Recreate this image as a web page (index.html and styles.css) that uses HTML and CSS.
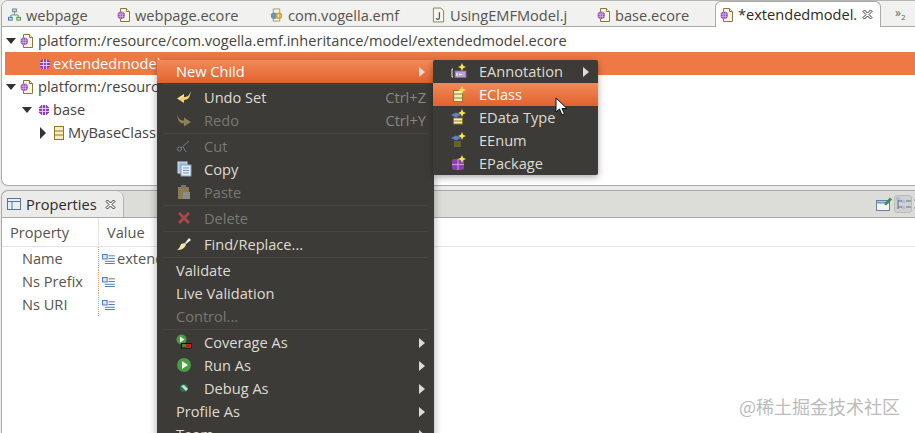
FILE: index.html
```html
<!DOCTYPE html>
<html lang="en">
<head>
<meta charset="utf-8">
<title>Eclipse EMF editor</title>
<link rel="stylesheet" href="styles.css">
</head>
<body>
<svg class="defs" width="0" height="0">
  <defs>
    <symbol id="pkg" viewBox="0 0 12 12"><path d="M3.500 1h5l2.500 2.500v5L8.500 11h-5L1 8.500v-5z" fill="#8a3fb5"/><path d="M1 4.500h10M1 7.500h10M4.500 1v10M7.500 1v10" stroke="#e6d3f2" stroke-width=".9"/></symbol>
    <symbol id="ecore" viewBox="0 0 13 16"><path d="M3.500 1.500h6l3 3v10h-9z" fill="#fbf6e2" stroke="#8a7440"/><path d="M9.500 1.500v3h3" fill="#fff" stroke="#8a7440"/><g transform="translate(0 4)"><use href="#pkg" width="8.500" height="8.500"/></g></symbol>
    <symbol id="cls" viewBox="0 0 10 14"><rect x=".5" y=".5" width="9" height="13" fill="#f8edb8" stroke="#8f7a2a"/><path d="M1 5h8M1 9h8" stroke="#8f7a2a"/></symbol>
    <symbol id="attr" viewBox="0 0 14 11"><rect x=".5" y=".5" width="5" height="5" fill="#dbe7f6" stroke="#3f6fb0"/><path d="M7 2h7M7 5h7M3 8h11M3 10.500h11" stroke="#3f6fb0"/></symbol>
    <symbol id="close" viewBox="0 0 11 11"><path d="M1 2.500 2.500 1 5.500 4 8.500 1 10 2.500 7 5.500 10 8.500 8.500 10 5.500 7 2.500 10 1 8.500 4 5.500z" fill="#fff" stroke="#333"/></symbol>
  </defs>
</svg>

<section class="editor">
  <div class="tabs">
    <div class="tab"><svg class="ic" viewBox="0 0 14 14"><path d="M7 3v4M3 10V7h8v3" fill="none" stroke="#7a8a7a"/><rect x="5" y=".5" width="4" height="3" fill="#f1d98a" stroke="#5a7fb0"/><rect x=".5" y="9.500" width="4" height="3" fill="#cfe3f5" stroke="#3f6fb0"/><rect x="9.500" y="9.500" width="4" height="3" fill="#cfe9c5" stroke="#4f8f4f"/></svg><span>webpage</span></div>
    <div class="tab"><svg class="ic"><use href="#ecore"/></svg><span>webpage.ecore</span></div>
    <div class="tab"><svg class="ic" viewBox="0 0 16 16"><path d="M4 .5h8v15H4z" fill="#f3efe2" stroke="#a58a52"/><circle cx="5" cy="9" r="4" fill="#5f93c9"/><circle cx="11" cy="9" r="3" fill="none" stroke="#d9a520" stroke-width="2"/></svg><span>com.vogella.emf</span></div>
    <div class="tab"><svg class="ic" viewBox="0 0 14 16"><path d="M1.500 .5h8l3 3v12h-11z" fill="#fbf8ea" stroke="#8a7a4a"/><path d="M8 5v6c0 2-3 2-3.500.5" fill="none" stroke="#2f5fa8" stroke-width="1.400"/></svg><span>UsingEMFModel.j</span></div>
    <div class="tab"><svg class="ic"><use href="#ecore"/></svg><span>base.ecore</span></div>
    <div class="tab tab-active"><svg class="ic"><use href="#ecore"/></svg><span>*extendedmodel.</span><svg class="x"><use href="#close"/></svg></div>
    <div class="more">»<sub>2</sub></div>
  </div>
  <ul class="tree">
    <li class="node"><i class="tw tw-open"></i><svg class="ic"><use href="#ecore"/></svg><span>platform:/resource/com.vogella.emf.inheritance/model/extendedmodel.ecore</span></li>
    <li class="node node-sel d1"><svg class="pk"><use href="#pkg"/></svg><span>extendedmodel</span></li>
    <li class="node"><i class="tw tw-open"></i><svg class="ic"><use href="#ecore"/></svg><span>platform:/resource/com.vogella.emf.inheritance/model/base.ecore</span></li>
    <li class="node d2"><i class="tw tw-open"></i><svg class="pk"><use href="#pkg"/></svg><span>base</span></li>
    <li class="node d3"><i class="tw tw-closed"></i><svg class="cl"><use href="#cls"/></svg><span>MyBaseClass</span></li>
  </ul>
</section>

<section class="props">
  <div class="props-bar">
    <div class="ptab"><svg class="pi" viewBox="0 0 14 14"><rect x=".5" y="1.500" width="13" height="11" fill="#e8eef6" stroke="#5d7690"/><path d="M1 4.500h12M5 5v7" stroke="#5d7690"/></svg><span>Properties</span><svg class="x"><use href="#close"/></svg></div>
    <div class="tools">
      <svg class="tool" viewBox="0 0 16 16"><rect x=".5" y="4.500" width="13" height="10" fill="#f2f5f9" stroke="#6d7f92"/><path d="M1 6.500h12" stroke="#6aa0d8" stroke-width="2"/><path d="M8 8 14 1.500l2 2-6 6z" fill="#3f8f4a"/></svg>
      <svg class="tool tool-on" viewBox="0 0 16 16"><path d="M3 1v12M3 5h4M3 11h4" stroke="#5f6f98" fill="none"/><rect x="1" y="1" width="4" height="3" fill="#aebbe0"/><rect x="7" y="4" width="3" height="3" fill="#aebbe0"/><rect x="7" y="10" width="3" height="3" fill="#aebbe0"/><path d="M11 5h5M11 11h5" stroke="#5f6f98"/></svg>
      <svg class="tool" viewBox="0 0 16 16"><path d="M0 4h5M0 12h5M2 4v8" stroke="#5f6f98" fill="none"/></svg>
    </div>
  </div>
  <div class="grid">
    <div class="gh gh-prop">Property</div><div class="gh">Value</div>
    <div class="gk">Name</div><div class="gv"><svg class="av"><use href="#attr"/></svg><span>extendedmodel</span></div>
    <div class="gk">Ns Prefix</div><div class="gv"><svg class="av"><use href="#attr"/></svg></div>
    <div class="gk">Ns URI</div><div class="gv"><svg class="av"><use href="#attr"/></svg></div>
  </div>
</section>

<nav class="menu">
  <div class="mi hot plain"><span>New Child</span><i class="ar"></i></div>
  <div class="sep"></div>
  <div class="mi"><svg class="mic" viewBox="0 0 16 16"><path d="M14.500 1.500C14 6 12 8 8 8V5L1 9.500 8 14v-3c4 0 7-3 6.500-9.500z" fill="#f5cf72"/><path d="M8 6 2.500 9.500" stroke="#fff3c8"/></svg><span>Undo Set</span><kbd>Ctrl+Z</kbd></div>
  <div class="mi off"><svg class="mic" viewBox="0 0 16 16"><path d="M1.500 2C2 6.500 4 8.500 8 8.500V5.500L15 10l-7 4.500v-3C4 11.500 1 8.500 1.500 2z" fill="#8f8155"/></svg><span>Redo</span><kbd>Ctrl+Y</kbd></div>
  <div class="sep"></div>
  <div class="mi off"><svg class="mic" viewBox="0 0 16 16"><circle cx="3.500" cy="11" r="2" fill="none" stroke="#6f7d85"/><path d="M5 10 13 3M7 9l3 5" stroke="#6f7d85" fill="none"/></svg><span>Cut</span></div>
  <div class="mi"><svg class="mic" viewBox="0 0 16 16"><rect x="2" y="1" width="9" height="11" fill="#9fc0de" stroke="#cfe0ee"/><rect x="5" y="4" width="10" height="11" fill="#e8eef5" stroke="#7fa5c8"/><path d="M7 7h6M7 9.500h6M7 12h6" stroke="#6f93b5"/></svg><span>Copy</span></div>
  <div class="mi off"><svg class="mic" viewBox="0 0 16 16"><rect x="2" y="3" width="11" height="12" fill="#8a7a55"/><rect x="5" y="1" width="5" height="3" fill="#77726a"/><rect x="7" y="8" width="7" height="7" fill="#8c8c86"/></svg><span>Paste</span></div>
  <div class="sep"></div>
  <div class="mi off"><svg class="mic" viewBox="0 0 16 16"><path d="M2 4l2-2 4 4 4-4 2 2-4 4 4 4-2 2-4-4-4 4-2-2 4-4z" fill="#a84848"/></svg><span>Delete</span></div>
  <div class="sep"></div>
  <div class="mi"><svg class="mic" viewBox="0 0 16 16"><path d="M9 7 13 2l2 2-5 4z" fill="#f2f2f2"/><path d="M9 7l1 2c-2 4-5 5-9 5 2-1 3-3 4-6z" fill="#efe6b0"/></svg><span>Find/Replace...</span></div>
  <div class="sep"></div>
  <div class="mi plain"><span>Validate</span></div>
  <div class="mi plain"><span>Live Validation</span></div>
  <div class="mi plain off"><span>Control...</span></div>
  <div class="sep"></div>
  <div class="mi"><svg class="mic" viewBox="0 0 16 16"><circle cx="5.500" cy="5.500" r="5" fill="#4b9a45"/><path d="M4 2.500 8.500 5.500 4 8.500z" fill="#e8f5e0"/><rect x="5.500" y="9.500" width="9.500" height="4.500" fill="#3c8a3c" stroke="#111"/><rect x="10" y="10" width="5" height="4" fill="#c81e1e"/></svg><span>Coverage As</span><i class="ar"></i></div>
  <div class="mi"><svg class="mic" viewBox="0 0 16 16"><circle cx="8" cy="8" r="7" fill="#4b9a45"/><path d="M6 4 12 8 6 12z" fill="#eef7e8"/></svg><span>Run As</span><i class="ar"></i></div>
  <div class="mi"><svg class="mic" viewBox="0 0 16 16"><circle cx="8" cy="8" r="4" fill="#2f6f55"/><path d="M5 6l3-1 4 4-2 2z" fill="#c5e0d0"/></svg><span>Debug As</span><i class="ar"></i></div>
  <div class="mi plain"><span>Profile As</span><i class="ar"></i></div>
  <div class="mi plain"><span>Team</span><i class="ar"></i></div>
</nav>

<nav class="submenu">
  <div class="si"><svg class="sic" viewBox="0 0 16 16"><path d="M2 6H1v8h1" fill="none" stroke="#eee"/><rect x="4" y="8" width="11" height="6.500" fill="#b9a5cf" stroke="#7d6a96"/><path d="M6 10v3M8 11.500h3" stroke="#fff"/><path d="M11 0l1.200 2.800L15 4l-2.800 1.200L11 8 9.800 5.200 7 4l2.800-1.200z" fill="#f8e24a"/></svg><span>EAnnotation</span><i class="ar"></i></div>
  <div class="si hot"><svg class="sic" viewBox="0 0 16 16"><rect x="2.500" y="4.500" width="9" height="11" fill="#f8edb8" stroke="#8f7a2a"/><path d="M3 8h8M3 12h8" stroke="#8f7a2a"/><path d="M11 0l1.200 2.800L15 4l-2.800 1.200L11 8 9.800 5.200 7 4l2.800-1.200z" fill="#f8e24a"/></svg><span>EClass</span></div>
  <div class="si"><svg class="sic" viewBox="0 0 16 16"><path d="M0 6l5-2.500L10 6l-5 2.500z" fill="#5f7fc8"/><rect x="2.500" y="9" width="9" height="6" fill="#f8edb8" stroke="#8f7a2a"/><path d="M3 12h8" stroke="#8f7a2a"/><path d="M11 0l1.200 2.800L15 4l-2.800 1.200L11 8 9.800 5.200 7 4l2.800-1.200z" fill="#f8e24a"/></svg><span>EData Type</span></div>
  <div class="si"><svg class="sic" viewBox="0 0 16 16"><path d="M0 6l5-2.500L10 6l-5 2.500z" fill="#5f7fc8"/><path d="M3 10h7M3 12h7M3 14h7" stroke="#8f8a2a"/><path d="M11 0l1.200 2.800L15 4l-2.800 1.200L11 8 9.800 5.200 7 4l2.800-1.200z" fill="#f8e24a"/></svg><span>EEnum</span></div>
  <div class="si"><svg class="sic" viewBox="0 0 16 16"><rect x="1" y="4" width="12" height="11" rx="2" fill="#8a3fb5"/><path d="M1 9.500h12M7 4v11" stroke="#c9a0e0"/><path d="M11 0l1.200 2.800L15 4l-2.800 1.200L11 8 9.800 5.200 7 4l2.800-1.200z" fill="#f8e24a"/></svg><span>EPackage</span></div>
</nav>

<svg class="cursor" viewBox="0 0 13 19"><path d="M1 1v14l3.500-3 2.500 6 2.500-1-2.500-5.500H12z" fill="#fff" stroke="#111"/></svg>
<div class="mark">@稀土掘金技术社区</div>
</body>
</html>
```
FILE: styles.css
```css
* { box-sizing: border-box; }
html, body { margin: 0; padding: 0; }
body {
  position: relative;
  width: 915px;
  height: 433px;
  overflow: hidden;
  background: #ebebe9;
  color: #45443f;
  font: 14.6px/23px "Open Sans", "Noto Sans", sans-serif;
}
.defs { position: absolute; }
.editor {
  height: 186px;
  margin-left: 1px;
  border: 1px solid #a9a9a5;
  border-right: 0;
  border-top-color: #b5b5b1;
  border-radius: 7px 0 0 7px;
  overflow: hidden;
  background: #fff;
}
.tabs {
  display: grid;
  grid-template-columns: 109px 153px 162px 165px 118px 166px 1fr;
  height: 26px;
  padding-left: 6px;
  background: #f1f1ef;
  border-bottom: 1px solid #a9a9a5;
  color: #55544f;
}
.tab { display: flex; align-items: center; gap: 5px; white-space: nowrap; overflow: hidden; }
.tab-active {
  position: relative;
  height: 26px;
  padding-left: 4px;
  background: #fff;
  color: #2b2a27;
  border: 1px solid #a9a9a5;
  border-bottom: 0;
  border-radius: 6px 6px 0 0;
}
.ic { flex: none; width: 13px; height: 16px; }
.x { flex: none; width: 11px; height: 11px; margin-left: 3px; }
.tab-active .x { margin-left: 0; }
.more { padding-left: 14px; color: #666; font-size: 12px; line-height: 24px; }
.more sub { font-size: 8px; }
.tree { margin: 0; padding: 2px 0 0 3px; list-style: none; }
.node { display: flex; align-items: center; gap: 4px; height: 23px; white-space: nowrap; }
.node .ic { margin-right: 1px; }
.node-sel { background: #ef7944; color: #fff; }
.d1 { padding-left: 34px; }
.d2 { padding-left: 16px; }
.d2 .tw { margin-right: 2px; }
.d2 .pk { margin-right: -1px; }
.d3 { padding-left: 34px; }
.tw { flex: none; margin-left: 1px; }
.tw-open { width: 0; height: 0; border: 5.500px solid transparent; border-top: 6px solid #33322e; border-bottom: 0; }
.tw-closed { width: 0; height: 0; border: 6px solid transparent; border-left: 6px solid #33322e; border-right: 0; margin-right: 4px; }
.pk { flex: none; width: 12px; height: 12px; margin-right: -2px; }
.cl { flex: none; width: 10px; height: 14px; }

.props { position: relative; }
.props-bar {
  display: flex;
  justify-content: space-between;
  height: 28px;
  margin: 4px 0 0 1px;
  background: #dcdcd9;
  border: 1px solid #a9a9a5;
  border-right: 0;
  border-radius: 7px 0 0 0;
}
.ptab {
  display: flex;
  align-items: center;
  gap: 5px;
  width: 122px;
  padding-left: 5px;
  background: #ebebe9;
  color: #2b2a27;
  border-right: 1px solid #b5b5b1;
  border-radius: 7px 7px 0 0;
}
.pi { flex: none; width: 14px; height: 14px; }
.tools { display: flex; align-items: center; gap: 3px; margin-right: -15px; }
.tool { width: 16px; height: 16px; }
.tool-on { background: #d0d0cd; outline: 1px solid #bcbcb8; border-radius: 2px; }
.grid {
  display: grid;
  grid-template-columns: 97px 1fr;
  grid-template-rows: 29px repeat(3, 23px) 1fr;
  margin-left: 1px;
  border-left: 1px solid #a9a9a5;
  height: 220px;
  background: #fff;
  color: #55544f;
}
.gh { padding-left: 8px; line-height: 28px; border-bottom: 1px solid #e4e4e2; }
.gh-prop { border-right: 1px solid #e4e4e2; }
.gk { padding-left: 20px; border-right: 1px dotted #d9a17f; }
.gv { display: flex; align-items: center; gap: 2px; padding-left: 3px; }
.av { flex: none; width: 13px; height: 10px; }

.menu {
  position: absolute;
  left: 157px;
  top: 60px;
  width: 277px;
  height: 390px;
  background: #3c3b37;
  color: #dfdbd2;
  box-shadow: 0 2px 8px rgba(0, 0, 0, .35);
}
.mi {
  display: flex;
  align-items: center;
  height: 23px;
  padding: 0 8px 0 47px;
  position: relative;
}
.mi.plain { padding-left: 19px; }
.mic { position: absolute; left: 19px; top: 3px; width: 16px; height: 16px; }
.mi.off { color: #7a7872; }
.mi kbd { margin-left: auto; font: inherit; color: #8a8880; }
.ar {
  margin-left: auto;
  width: 0;
  height: 0;
  border: 5px solid transparent;
  border-left: 6px solid #dfdbd2;
  border-right: 0;
  margin-right: 1px;
}
.hot { background: linear-gradient(#f08a58, #e2622e); color: #fff; }
.sep { height: 3px; position: relative; }
.sep::after { content: ""; position: absolute; left: 6px; right: 6px; top: 1px; height: 1px; background: #45443f; }
.submenu {
  position: absolute;
  left: 433px;
  top: 60px;
  width: 165px;
  height: 115px;
  background: #3c3b37;
  color: #dfdbd2;
  box-shadow: 0 2px 7px rgba(0, 0, 0, .35);
  border-radius: 2px;
}
.si {
  position: relative;
  display: flex;
  align-items: center;
  height: 23px;
  padding: 0 8px 0 46px;
}
.sic { position: absolute; left: 18px; top: 3px; width: 16px; height: 16px; }
.cursor { position: absolute; left: 555px; top: 97px; width: 13px; height: 19px; }
.mark {
  position: absolute;
  left: 739px;
  top: 394px;
  color: #bbb;
  font: 18px/24px "Noto Sans CJK SC", sans-serif;
  white-space: nowrap;
}
```
